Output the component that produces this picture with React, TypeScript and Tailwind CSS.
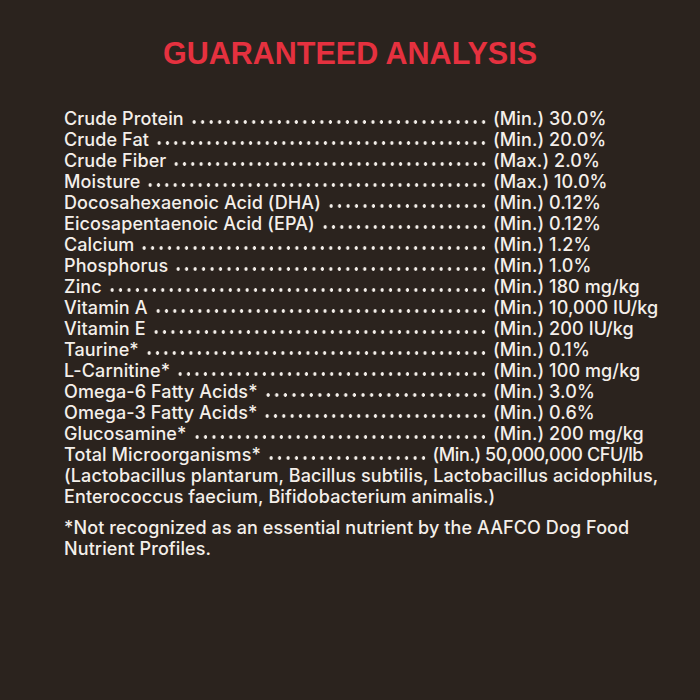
import React from "react";

const rows: [string, string][] = [
  ["Crude Protein", "(Min.) 30.0%"],
  ["Crude Fat", "(Min.) 20.0%"],
  ["Crude Fiber", "(Max.) 2.0%"],
  ["Moisture", "(Max.) 10.0%"],
  ["Docosahexaenoic Acid (DHA)", "(Min.) 0.12%"],
  ["Eicosapentaenoic Acid (EPA)", "(Min.) 0.12%"],
  ["Calcium", "(Min.) 1.2%"],
  ["Phosphorus", "(Min.) 1.0%"],
  ["Zinc", "(Min.) 180 mg/kg"],
  ["Vitamin A", "(Min.) 10,000 IU/kg"],
  ["Vitamin E", "(Min.) 200 IU/kg"],
  ["Taurine*", "(Min.) 0.1%"],
  ["L-Carnitine*", "(Min.) 100 mg/kg"],
  ["Omega-6 Fatty Acids*", "(Min.) 3.0%"],
  ["Omega-3 Fatty Acids*", "(Min.) 0.6%"],
  ["Glucosamine*", "(Min.) 200 mg/kg"],
];

function Dots() {
  return (
    <span className="flex-1 self-stretch ml-[6px] mr-[5px] bg-[radial-gradient(circle,#f4efea_1.5px,transparent_2px)] bg-[length:8.3px_6px] [background-repeat:space_no-repeat] bg-[position:right_bottom_4px]" />
  );
}

export default function App() {
  return (
    <div
      className="w-[700px] h-[700px] bg-[#2b231e] text-[#f4efea] overflow-hidden"
      style={{ fontFamily: "Inter, 'Noto Sans', sans-serif" }}
    >
      <h1
        className="text-center font-bold text-[30.5px] leading-none text-[#e5313f] pt-[38px]"
        style={{ fontFamily: "'Liberation Sans', Arial, sans-serif" }}
      >
        GUARANTEED ANALYSIS
      </h1>
      <div className="ml-[64px] w-[590px] mt-[39px] text-[18px] font-medium leading-[21px] tracking-[0.1px] proportional-nums">
        {rows.map(([label, value]) => (
          <div key={label} className="flex items-end">
            <span className="whitespace-nowrap">{label}</span>
            <Dots />
            <span className="w-[161px] whitespace-nowrap">{value}</span>
          </div>
        ))}
        <div className="flex items-end">
          <span className="whitespace-nowrap">Total Microorganisms*</span>
          <Dots />
          <span className="whitespace-nowrap pr-[11px] tracking-[-0.4px]">(Min.) 50,000,000 CFU/lb</span>
        </div>
        <p className="whitespace-nowrap">
          (Lactobacillus plantarum, Bacillus subtilis, Lactobacillus acidophilus,
          <br />
          Enterococcus faecium, Bifidobacterium animalis.)
        </p>
        <p className="mt-[10px] whitespace-nowrap">
          *Not recognized as an essential nutrient by the AAFCO Dog Food
          <br />
          Nutrient Profiles.
        </p>
      </div>
    </div>
  );
}
